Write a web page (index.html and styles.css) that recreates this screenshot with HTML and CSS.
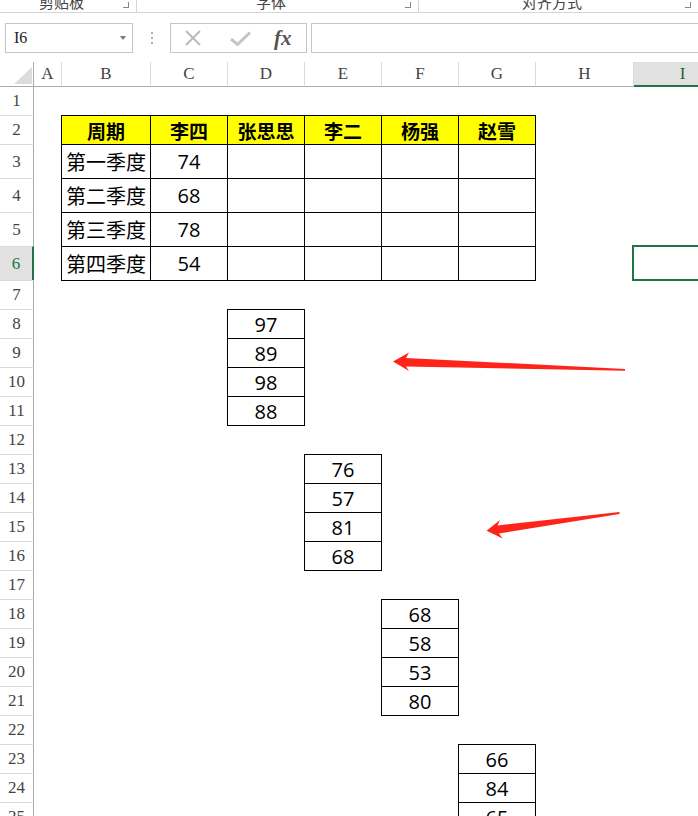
FILE: index.html
```html
<!DOCTYPE html>
<html lang="zh-CN">
<head>
    <meta charset="UTF-8">
    <meta name="viewport" content="width=device-width, initial-scale=1.0">
    <title>季度数据</title>
    <link rel="stylesheet" href="styles.css">
</head>

<body>
    <!-- ribbon group labels (cut off at the top) -->
    <div class="ribbon">
        <div class="group"><span class="group-label">剪贴板</span><span class="launcher"></span></div>
        <div class="group wide"><span class="group-label">字体</span><span class="launcher"></span></div>
        <div class="group last"><span class="group-label">对齐方式</span><span class="launcher"></span></div>
    </div>

    <!-- formula bar -->
    <div class="formula-bar">
        <div class="name-box">I6<span class="caret"></span></div>
        <div class="grip"></div>
        <div class="fx-buttons">
            <svg class="icon-cancel" width="16" height="16" viewBox="0 0 16 16">
                <path d="M1 1 L15 15 M15 1 L1 15" stroke="#b8b8b8" stroke-width="1.8" fill="none"/>
            </svg>
            <svg class="icon-enter" width="21" height="15" viewBox="0 0 21 15">
                <path d="M1 8 L7.5 13.5 L20 1.5" stroke="#c4c4c4" stroke-width="3" fill="none"/>
            </svg>
            <span class="fx">fx</span>
        </div>
        <div class="formula-input"></div>
    </div>

    <!-- worksheet -->
    <div class="sheet">
        <div class="row head">
            <div class="corner"></div>
            <div class="ch">A</div>
            <div class="ch">B</div>
            <div class="ch">C</div>
            <div class="ch">D</div>
            <div class="ch">E</div>
            <div class="ch">F</div>
            <div class="ch">G</div>
            <div class="ch">H</div>
            <div class="ch active">I</div>
        </div>

        <div class="row first"><div class="rh">1</div></div>
        <div class="row">
            <div class="rh">2</div>
            <div class="cell box th c-b">周期</div>
            <div class="cell box th">李四</div>
            <div class="cell box th">张思思</div>
            <div class="cell box th">李二</div>
            <div class="cell box th">杨强</div>
            <div class="cell box th">赵雪</div>
        </div>
        <div class="row tall">
            <div class="rh">3</div>
            <div class="cell box label c-b">第一季度</div>
            <div class="cell box num">74</div>
            <div class="cell box"></div><div class="cell box"></div><div class="cell box"></div><div class="cell box"></div>
        </div>
        <div class="row tall">
            <div class="rh">4</div>
            <div class="cell box label c-b">第二季度</div>
            <div class="cell box num">68</div>
            <div class="cell box"></div><div class="cell box"></div><div class="cell box"></div><div class="cell box"></div>
        </div>
        <div class="row tall">
            <div class="rh">5</div>
            <div class="cell box label c-b">第三季度</div>
            <div class="cell box num">78</div>
            <div class="cell box"></div><div class="cell box"></div><div class="cell box"></div><div class="cell box"></div>
        </div>
        <div class="row tall">
            <div class="rh active">6</div>
            <div class="cell box label c-b">第四季度</div>
            <div class="cell box num">54</div>
            <div class="cell box"></div><div class="cell box"></div><div class="cell box"></div><div class="cell box"></div>
            <div class="cell selected c-i"></div>
        </div>
        <div class="row"><div class="rh">7</div></div>

        <div class="row"><div class="rh">8</div><div class="cell box num c-d">97</div></div>
        <div class="row"><div class="rh">9</div><div class="cell box num c-d">89</div></div>
        <div class="row"><div class="rh">10</div><div class="cell box num c-d">98</div></div>
        <div class="row"><div class="rh">11</div><div class="cell box num c-d">88</div></div>
        <div class="row"><div class="rh">12</div></div>

        <div class="row"><div class="rh">13</div><div class="cell box num c-e">76</div></div>
        <div class="row"><div class="rh">14</div><div class="cell box num c-e">57</div></div>
        <div class="row"><div class="rh">15</div><div class="cell box num c-e">81</div></div>
        <div class="row"><div class="rh">16</div><div class="cell box num c-e">68</div></div>
        <div class="row"><div class="rh">17</div></div>

        <div class="row"><div class="rh">18</div><div class="cell box num c-f">68</div></div>
        <div class="row"><div class="rh">19</div><div class="cell box num c-f">58</div></div>
        <div class="row"><div class="rh">20</div><div class="cell box num c-f">53</div></div>
        <div class="row"><div class="rh">21</div><div class="cell box num c-f">80</div></div>
        <div class="row"><div class="rh">22</div></div>

        <div class="row"><div class="rh">23</div><div class="cell box num c-g">66</div></div>
        <div class="row"><div class="rh">24</div><div class="cell box num c-g">84</div></div>
        <div class="row"><div class="rh">25</div><div class="cell box num c-g">65</div></div>
    </div>

    <!-- red arrows drawn over the sheet -->
    <svg class="arrows" width="698" height="816" viewBox="0 0 698 816">
        <polygon points="393,361.5 409,352.5 406,358 625,369 625,370.8 406,366.5 409,371" fill="#ff2419"/>
        <polygon points="486.5,530.7 500,520 497.5,525.5 619.5,512 619.5,514 499,533.5 502.7,538.5" fill="#ff2419"/>
    </svg>
</body>
</html>
```

FILE: styles.css
```css
/* General Page Styling */
body, html {
    margin: 0;
    padding: 0;
    background: #ffffff;
    font-family: "Noto Sans CJK SC", sans-serif;
    color: #000;
}

body {
    position: relative;
    width: 698px;
    height: 816px;
    overflow: hidden;
}

/* Ribbon group labels */
.ribbon {
    display: flex;
    height: 12px;
    border-bottom: 1px solid #d6d6d6;
    overflow: hidden;
}

.group {
    display: grid;
    grid-template-columns: 1fr 6px;
    width: 137px;
    padding-right: 7px;
    box-sizing: border-box;
    border-right: 1px solid #d6d6d6;
}

.group.wide {
    width: 282px;
}

.group.last {
    flex: 1;
    border-right: none;
}

.group-label {
    text-align: center;
    font-size: 15px;
    line-height: 15px;
    margin-top: -6px;
    color: #444;
}

.launcher {
    width: 5px;
    height: 5px;
    margin-top: 2px;
    border-right: 1px solid #888;
    border-bottom: 1px solid #888;
}

/* Formula bar */
.formula-bar {
    display: flex;
    align-items: center;
    height: 30px;
    margin-top: 10px;
}

.name-box {
    position: relative;
    width: 128px;
    height: 30px;
    margin-left: 5px;
    padding-left: 8px;
    box-sizing: border-box;
    border: 1px solid #c6c6c6;
    font-family: "Liberation Serif", serif;
    font-size: 16px;
    line-height: 28px;
    color: #222;
}

.caret {
    position: absolute;
    right: 6px;
    top: 12px;
    border-top: 4px solid #777;
    border-left: 3px solid transparent;
    border-right: 3px solid transparent;
}

.grip {
    width: 2px;
    height: 12px;
    margin-left: 18px;
    background: repeating-linear-gradient(#b0b0b0 0 2px, transparent 2px 5px);
}

.fx-buttons {
    display: flex;
    align-items: center;
    width: 137px;
    height: 30px;
    margin-left: 17px;
    padding-left: 14px;
    box-sizing: border-box;
    border: 1px solid #c6c6c6;
}

.icon-enter {
    margin-left: 29px;
}

.fx {
    margin-left: 23px;
    font-family: "Liberation Serif", serif;
    font-style: italic;
    font-weight: 700;
    font-size: 21px;
    color: #555;
}

.formula-input {
    flex: 1;
    height: 30px;
    margin-left: 4px;
    box-sizing: border-box;
    border: 1px solid #c6c6c6;
    border-right: none;
}

/* Worksheet */
.sheet {
    margin-top: 9px;
}

.row {
    display: grid;
    grid-template-columns: 34px 28px 89px 77px 77px 77px 77px 77px 98px 98px;
    height: 29px;
}

.row.first {
    height: 28px;
}

.row.tall {
    height: 34px;
}

.row.head {
    height: 25px;
}

/* Column headers */
.corner {
    display: flex;
    justify-content: flex-end;
    align-items: flex-end;
    padding: 0 1px 2px 0;
    border-right: 1px solid #ababab;
    border-bottom: 1px solid #ababab;
}

.corner::after {
    content: "";
    width: 18px;
    height: 17px;
    background: #dcdcdc;
    clip-path: polygon(100% 0, 100% 100%, 0 100%);
}

.ch {
    display: flex;
    justify-content: center;
    align-items: center;
    border-right: 1px solid #dadada;
    border-bottom: 1px solid #ababab;
    font-family: "Liberation Serif", serif;
    font-size: 17px;
    color: #444;
}

.ch.active {
    background: #e1e1e1;
    border-bottom: 2px solid #217346;
    color: #1f5f3a;
}

/* Row headers */
.rh {
    display: flex;
    justify-content: center;
    align-items: center;
    border-right: 1px solid #ababab;
    border-top: 1px solid #dadada;
    font-family: "Liberation Serif", serif;
    font-size: 17px;
    color: #444;
}

.row.first .rh {
    border-top: none;
}

.rh.active {
    background: #e1e1e1;
    border-right: 2px solid #217346;
    color: #217346;
}

/* Cells */
.cell {
    display: flex;
    justify-content: center;
    align-items: center;
    font-size: 20px;
}

.cell.box {
    border: 1px solid #000;
    margin: 0 0 -1px -1px;
}

.cell.th {
    background: #ffff00;
    font-weight: 700;
    font-size: 19px;
}

.cell.label {
    justify-content: flex-start;
    padding-left: 4px;
}

.cell.num {
    font-family: "Open Sans", "Noto Sans CJK SC", sans-serif;
}

.cell.selected {
    border: 2px solid #217346;
    margin: -1px 0 -1px -2px;
}

.c-b { grid-column: 3; }
.c-d { grid-column: 5; }
.c-e { grid-column: 6; }
.c-f { grid-column: 7; }
.c-g { grid-column: 8; }
.c-i { grid-column: 10; }

/* Arrows */
.arrows {
    position: absolute;
    top: 0;
    left: 0;
    pointer-events: none;
}
```
